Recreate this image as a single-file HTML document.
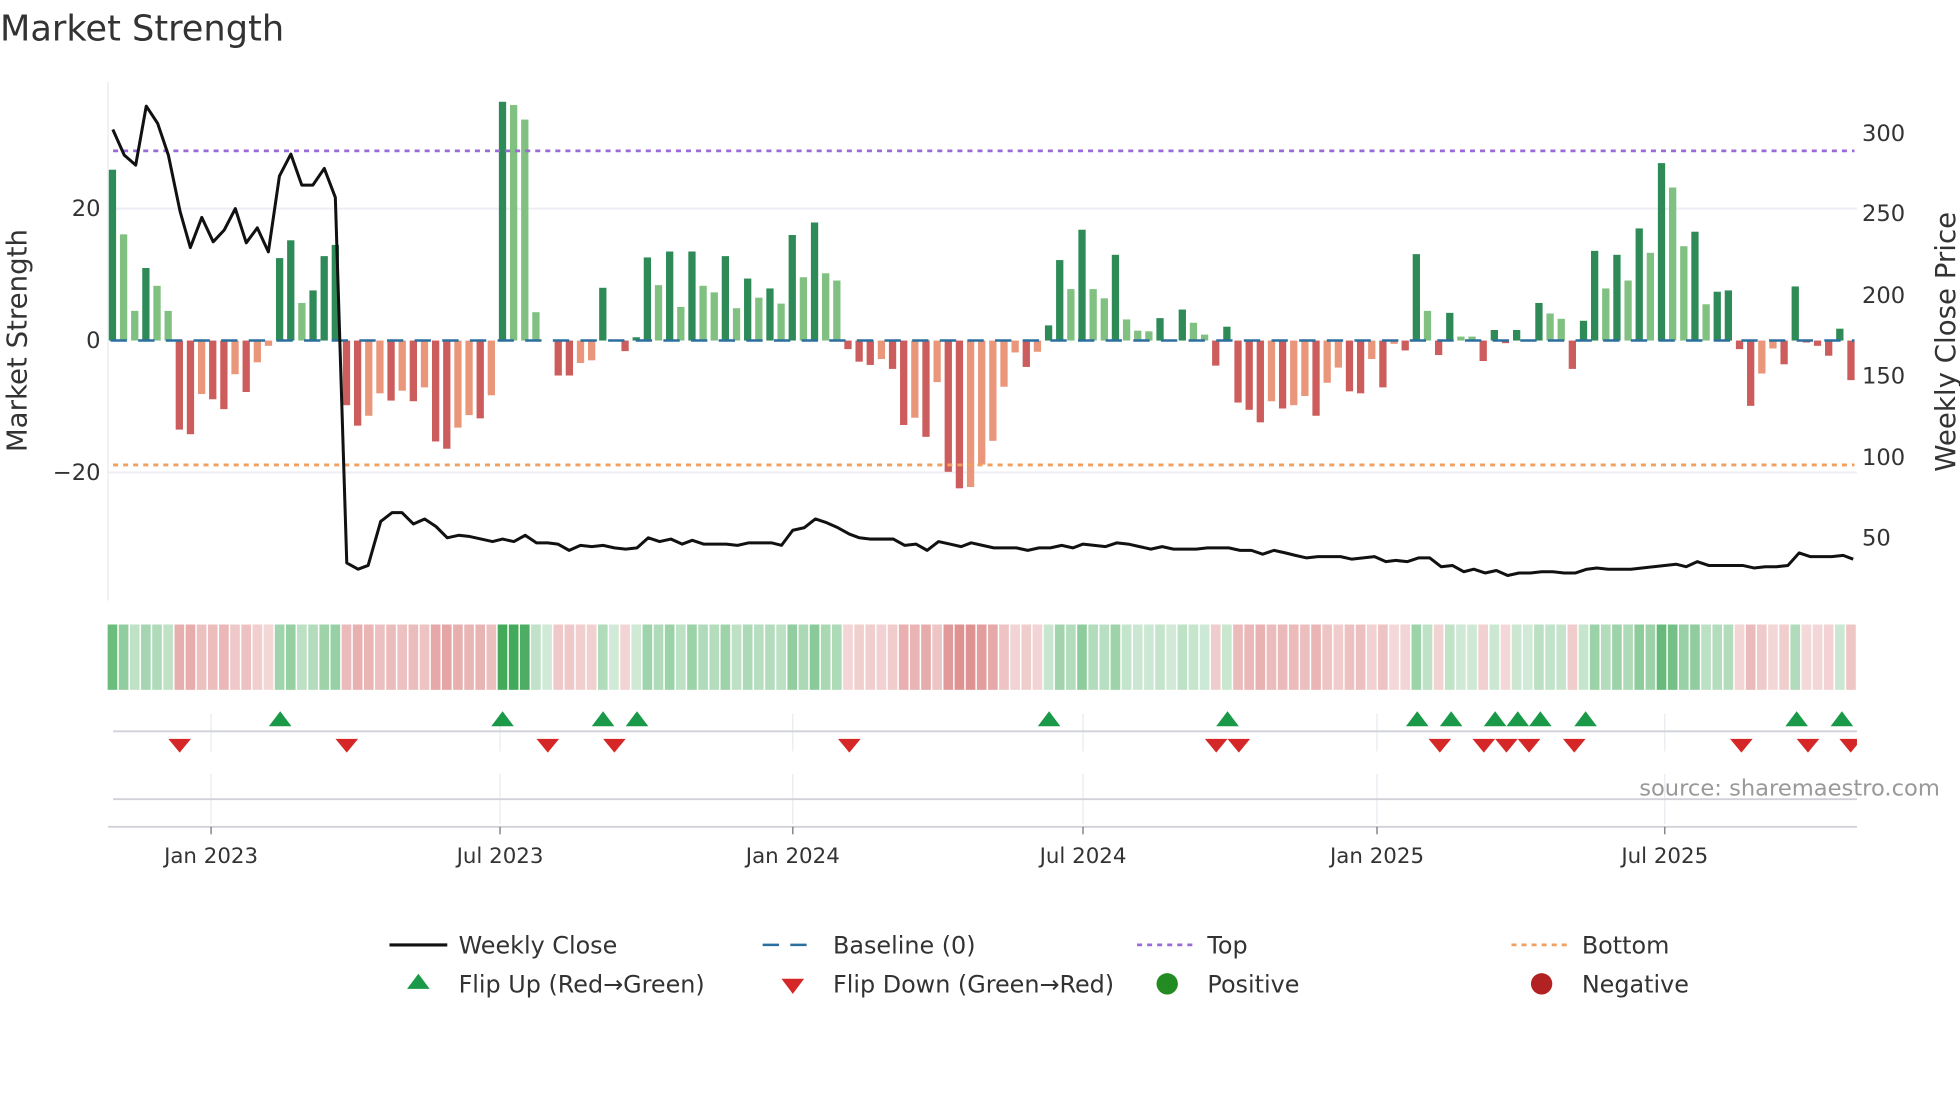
<!DOCTYPE html>
<html><head><meta charset="utf-8">
<style>
html,body{margin:0;padding:0;background:#fff;}
svg{display:block;font-family:"DejaVu Sans","Liberation Sans",sans-serif;}
</style></head>
<body>
<svg id="s" xmlns="http://www.w3.org/2000/svg" width="1960" height="1102" viewBox="0 0 1560 877">
<rect width="1560" height="877" fill="#fff"/>
<text x="0" y="32" font-size="28" fill="#333">Market Strength</text>
<!-- grid -->
<line x1="86" y1="166" x2="1478" y2="166" stroke="#eceef4" stroke-width="1.5"/>
<line x1="86" y1="376" x2="1478" y2="376" stroke="#eceef4" stroke-width="1.5"/>
<line x1="86" y1="65" x2="86" y2="478" stroke="#e8eaf0" stroke-width="1"/>
<g id="bars"></g>
<line x1="90" y1="120" x2="1476" y2="120" stroke="#9a6ad8" stroke-width="2.2" stroke-dasharray="4 4"/>
<line x1="90" y1="370" x2="1476" y2="370" stroke="#f0a060" stroke-width="2.2" stroke-dasharray="4 4"/>
<line x1="88" y1="271" x2="1476" y2="271" stroke="#2a6f9e" stroke-width="2" stroke-dasharray="13 9"/>
<polyline id="price" fill="none" stroke="#111" stroke-width="2.4" stroke-linejoin="round"/>
<!-- left axis ticks -->
<g font-size="18" fill="#333" text-anchor="end">
<text x="80" y="172">20</text><text x="80" y="277">0</text><text x="80" y="382">−20</text>
</g>
<g font-size="18" fill="#333">
<text x="1482" y="112">300</text><text x="1482" y="176">250</text><text x="1482" y="241">200</text>
<text x="1482" y="305">150</text><text x="1482" y="370">100</text><text x="1482" y="434">50</text>
</g>
<text transform="translate(21,271) rotate(-90)" font-size="22" fill="#333" text-anchor="middle">Market Strength</text>
<text transform="translate(1556,272) rotate(-90)" font-size="22" fill="#333" text-anchor="middle">Weekly Close Price</text>
<!-- heat strip -->
<g id="heat"></g>
<!-- vertical date grid -->
<g stroke="#eceef4" stroke-width="1.2">
<line x1="168" y1="568" x2="168" y2="598"/><line x1="398" y1="568" x2="398" y2="598"/><line x1="631" y1="568" x2="631" y2="598"/><line x1="862" y1="568" x2="862" y2="598"/><line x1="1096" y1="568" x2="1096" y2="598"/><line x1="1325" y1="568" x2="1325" y2="598"/>
<line x1="168" y1="616" x2="168" y2="656"/><line x1="398" y1="616" x2="398" y2="656"/><line x1="631" y1="616" x2="631" y2="656"/><line x1="862" y1="616" x2="862" y2="656"/><line x1="1096" y1="616" x2="1096" y2="656"/><line x1="1325" y1="616" x2="1325" y2="656"/>
</g>
<line x1="90" y1="582" x2="1478" y2="582" stroke="#d0d2d8" stroke-width="1.5"/>
<line x1="90" y1="636" x2="1478" y2="636" stroke="#d0d2d8" stroke-width="1.5"/>
<line x1="86" y1="658" x2="1478" y2="658" stroke="#d0d2d8" stroke-width="1.5"/>
<g id="marks"></g>
<g stroke="#888" stroke-width="1.2">
<line x1="168" y1="658" x2="168" y2="664"/><line x1="398" y1="658" x2="398" y2="664"/><line x1="631" y1="658" x2="631" y2="664"/><line x1="862" y1="658" x2="862" y2="664"/><line x1="1096" y1="658" x2="1096" y2="664"/><line x1="1325" y1="658" x2="1325" y2="664"/>
</g>
<g font-size="17" fill="#333" text-anchor="middle">
<text x="168" y="687">Jan 2023</text><text x="398" y="687">Jul 2023</text><text x="631" y="687">Jan 2024</text>
<text x="862" y="687">Jul 2024</text><text x="1096" y="687">Jan 2025</text><text x="1325" y="687">Jul 2025</text>
</g>
<text x="1544" y="633" font-size="18" fill="#999" text-anchor="end">source: sharemaestro.com</text>
<!-- legend -->
<g font-size="19" fill="#333">
<line x1="310" y1="752" x2="356" y2="752" stroke="#111" stroke-width="2.5"/>
<text x="365" y="759">Weekly Close</text>
<line x1="607" y1="752" x2="651" y2="752" stroke="#2a6f9e" stroke-width="2" stroke-dasharray="13 9"/>
<text x="663" y="759">Baseline (0)</text>
<line x1="905" y1="752" x2="949" y2="752" stroke="#9a6ad8" stroke-width="2.2" stroke-dasharray="4 4"/>
<text x="961" y="759">Top</text>
<line x1="1203" y1="752" x2="1247" y2="752" stroke="#f0a060" stroke-width="2.2" stroke-dasharray="4 4"/>
<text x="1259" y="759">Bottom</text>
<polygon points="324,787 342,787 333,775" fill="#1a9a48"/>
<text x="365" y="790">Flip Up (Red→Green)</text>
<polygon points="622,779 640,779 631,791" fill="#d62728"/>
<text x="663" y="790">Flip Down (Green→Red)</text>
<circle cx="929" cy="783" r="8.5" fill="#228b22"/>
<text x="961" y="790">Positive</text>
<circle cx="1227" cy="783" r="8.5" fill="#b22222"/>
<text x="1259" y="790">Negative</text>
</g>
</svg>
<script>
var D=[[25.9,1],[16.1,0],[4.5,0],[11.0,1],[8.3,0],[4.5,0],[-13.5,1],[-14.2,1],[-8.1,0],[-8.9,1],[-10.4,1],[-5.1,0],[-7.8,1],[-3.3,0],[-0.8,0],[12.5,1],[15.2,1],[5.7,0],[7.6,1],[12.8,1],[14.5,1],[-9.8,1],[-12.9,1],[-11.4,0],[-8.0,0],[-9.1,1],[-7.6,0],[-9.2,1],[-7.1,0],[-15.3,1],[-16.4,1],[-13.2,0],[-11.3,0],[-11.8,1],[-8.3,0],[36.2,1],[35.7,0],[33.5,0],[4.3,0],[0,0],[-5.3,1],[-5.3,1],[-3.4,0],[-3.0,0],[8.0,1],[0,0],[-1.6,1],[0.5,1],[12.6,1],[8.4,0],[13.5,1],[5.1,0],[13.5,1],[8.3,0],[7.3,0],[12.8,1],[4.9,0],
[9.4,1],[6.5,0],[7.9,1],[5.6,0],[16.0,1],[9.6,0],[17.9,1],[10.2,0],[9.1,0],[-1.3,1],[-3.2,1],[-3.7,1],[-2.8,0],[-4.3,1],[-12.8,1],[-11.7,0],[-14.6,1],[-6.3,0],[-19.9,1],[-22.4,1],[-22.2,0],[-18.8,0],[-15.2,0],[-7.0,0],[-1.8,0],[-4.0,1],[-1.7,0],[2.3,1],[12.2,1],[7.8,0],[16.8,1],[7.8,0],[6.4,0],[13.0,1],[3.2,0],[1.5,0],[1.4,0],[3.4,1],[0,0],[4.7,1],[2.7,0],[0.9,0],[-3.8,1],[2.1,1],[-9.4,1],[-10.5,1],[-12.4,1],[-9.2,0],[-10.3,1],[-9.8,0],[-8.4,0],[-11.4,1],[-6.4,0],[-4.1,0],[-7.7,1],[-8.0,1],
[-2.8,0],[-7.1,1],[-0.5,0],[-1.5,1],[13.1,1],[4.5,0],[-2.2,1],[4.2,1],[0.6,0],[0.6,0],[-3.1,1],[1.6,1],[-0.4,1],[1.6,1],[0,0],[5.7,1],[4.1,0],[3.3,0],[-4.3,1],[3.0,1],[13.6,1],[7.9,0],[13.0,1],[9.1,0],[17.0,1],[13.3,0],[26.9,1],[23.2,0],[14.3,0],[16.5,1],[5.5,0],[7.4,1],[7.6,1],[-1.3,1],[-9.9,1],[-5.0,0],[-1.2,0],[-3.6,1],[8.2,1],[-0.3,1],[-0.8,1],[-2.3,1],[1.8,1],[-6.0,1]];
var NS="http://www.w3.org/2000/svg";
function el(t,a,p){var e=document.createElementNS(NS,t);for(var k in a)e.setAttribute(k,a[k]);p.appendChild(e);return e;}
var bars=document.getElementById('bars'),heat=document.getElementById('heat');
var step=8.87,x0=89.5,bw=5.8;
function mix(c,a){return 'rgb('+[0,1,2].map(function(i){return Math.round(255+(c[i]-255)*a)}).join(',')+')';}
D.forEach(function(d,i){
 var v=d[0],x=x0+i*step;
 var col=v>=0?(d[1]?'#2e8b57':'#80c080'):(d[1]?'#cd5c5c':'#e9967a');
 var h=Math.abs(v)*5.25;
 if(h>0.3){el('rect',{x:x-bw/2,y:v>=0?271-h:271,width:bw,height:h,fill:col},bars);}
 var a=0.22+0.68*Math.min(1,Math.abs(v)/36);
 var c=v>=0?[46,160,72]:[205,85,85];
 el('rect',{x:x-step/2+0.6,y:497,width:step-1.2,height:52,fill:mix(c,a)},heat);
});
var P=[[89.8,103],[98.9,123.4],[108,131.4],[116.4,84.4],[125.5,98.2],[134,123.4],[143.4,168.5],[151.5,197],[160.6,173],[169.7,192.4],[178.5,183],[187.3,166],[196,193.2],[204.8,181.3],[213.6,200.4],[222.4,140.1],[231.5,122.6],[240.2,147.3],[249,147.3],[258.1,134],[266.9,157.1],[276,448],[285,453],[293,450],[303,415],[312,408],[320,408],[329,417],[338,413],[347,419],[356,428],[365,426],[374,427],[383,429],[392,431],[400,429],[409,431],[418,426],[427,432],[436,432],[444,433],[453,438],[462,434],[471,435],[480,434],[489,436],[498,437],[507,436],[516,428],[525,431],[534,429],[543,433],[551,430],[560,433],[569,433],[578,433],[587,434],[596,432],[605,432],[614,432],[622,434],[631,422],[640,420],[649,413],[658,416],[667,420],[676,425],[684,428],[693,429],[702,429],[711,429],[720,434],[729,433],[738,438],[747,431],[756,433],[765,435],[773,432],[782,434],[791,436],[800,436],[809,436],[818,438],[827,436],[836,436],[845,434],[854,436],[862,433],[871,434],[880,435],[889,432],[898,433],[907,435],[916,437],[925,435],[934,437],[943,437],[952,437],[961,436],[970,436],[978,436],[987,438],[996,438],[1005,441],[1014,438],[1023,440],[1031,442],[1040,444],[1049,443],[1058,443],[1067,443],[1076,445],[1085,444],[1094,443],[1103,447],[1111,446],[1120,447],[1129,444],[1138,444],[1147,451],[1156,450],[1165,455],[1173,453],[1182,456],[1191,454],[1200,458],[1209,456],[1218,456],[1227,455],[1236,455],[1245,456],[1254,456],[1263,453],[1271,452],[1280,453],[1289,453],[1298,453],[1307,452],[1316,451],[1325,450],[1334,449],[1342,451],[1351,447],[1360,450],[1369,450],[1378,450],[1387,450],[1396,452],[1405,451],[1414,451],[1423,450],[1432,440],[1441,443],[1450,443],[1458,443],[1467,442],[1475,445]];
document.getElementById('price').setAttribute('points',P.map(function(p){return p.join(',')}).join(' '));
var marks=document.getElementById('marks');
[223,400,480,507,835,977,1128,1155,1190,1208,1226,1262,1430,1466].forEach(function(x){
 el('polygon',{points:(x-9)+',578 '+(x+9)+',578 '+x+',566',fill:'#1a9a48'},marks);});
[143,276,436,489,676,968,986,1146,1181,1199,1217,1253,1386,1439,1473].forEach(function(x){
 var r=Math.min(x+9,1478);
 el('polygon',{points:(x-9)+',588 '+r+',588 '+(r<x+9?r+','+(588+(x+9-r)*11/9)+' ':'')+x+',599',fill:'#d62728'},marks);});
</script>
</body></html>
